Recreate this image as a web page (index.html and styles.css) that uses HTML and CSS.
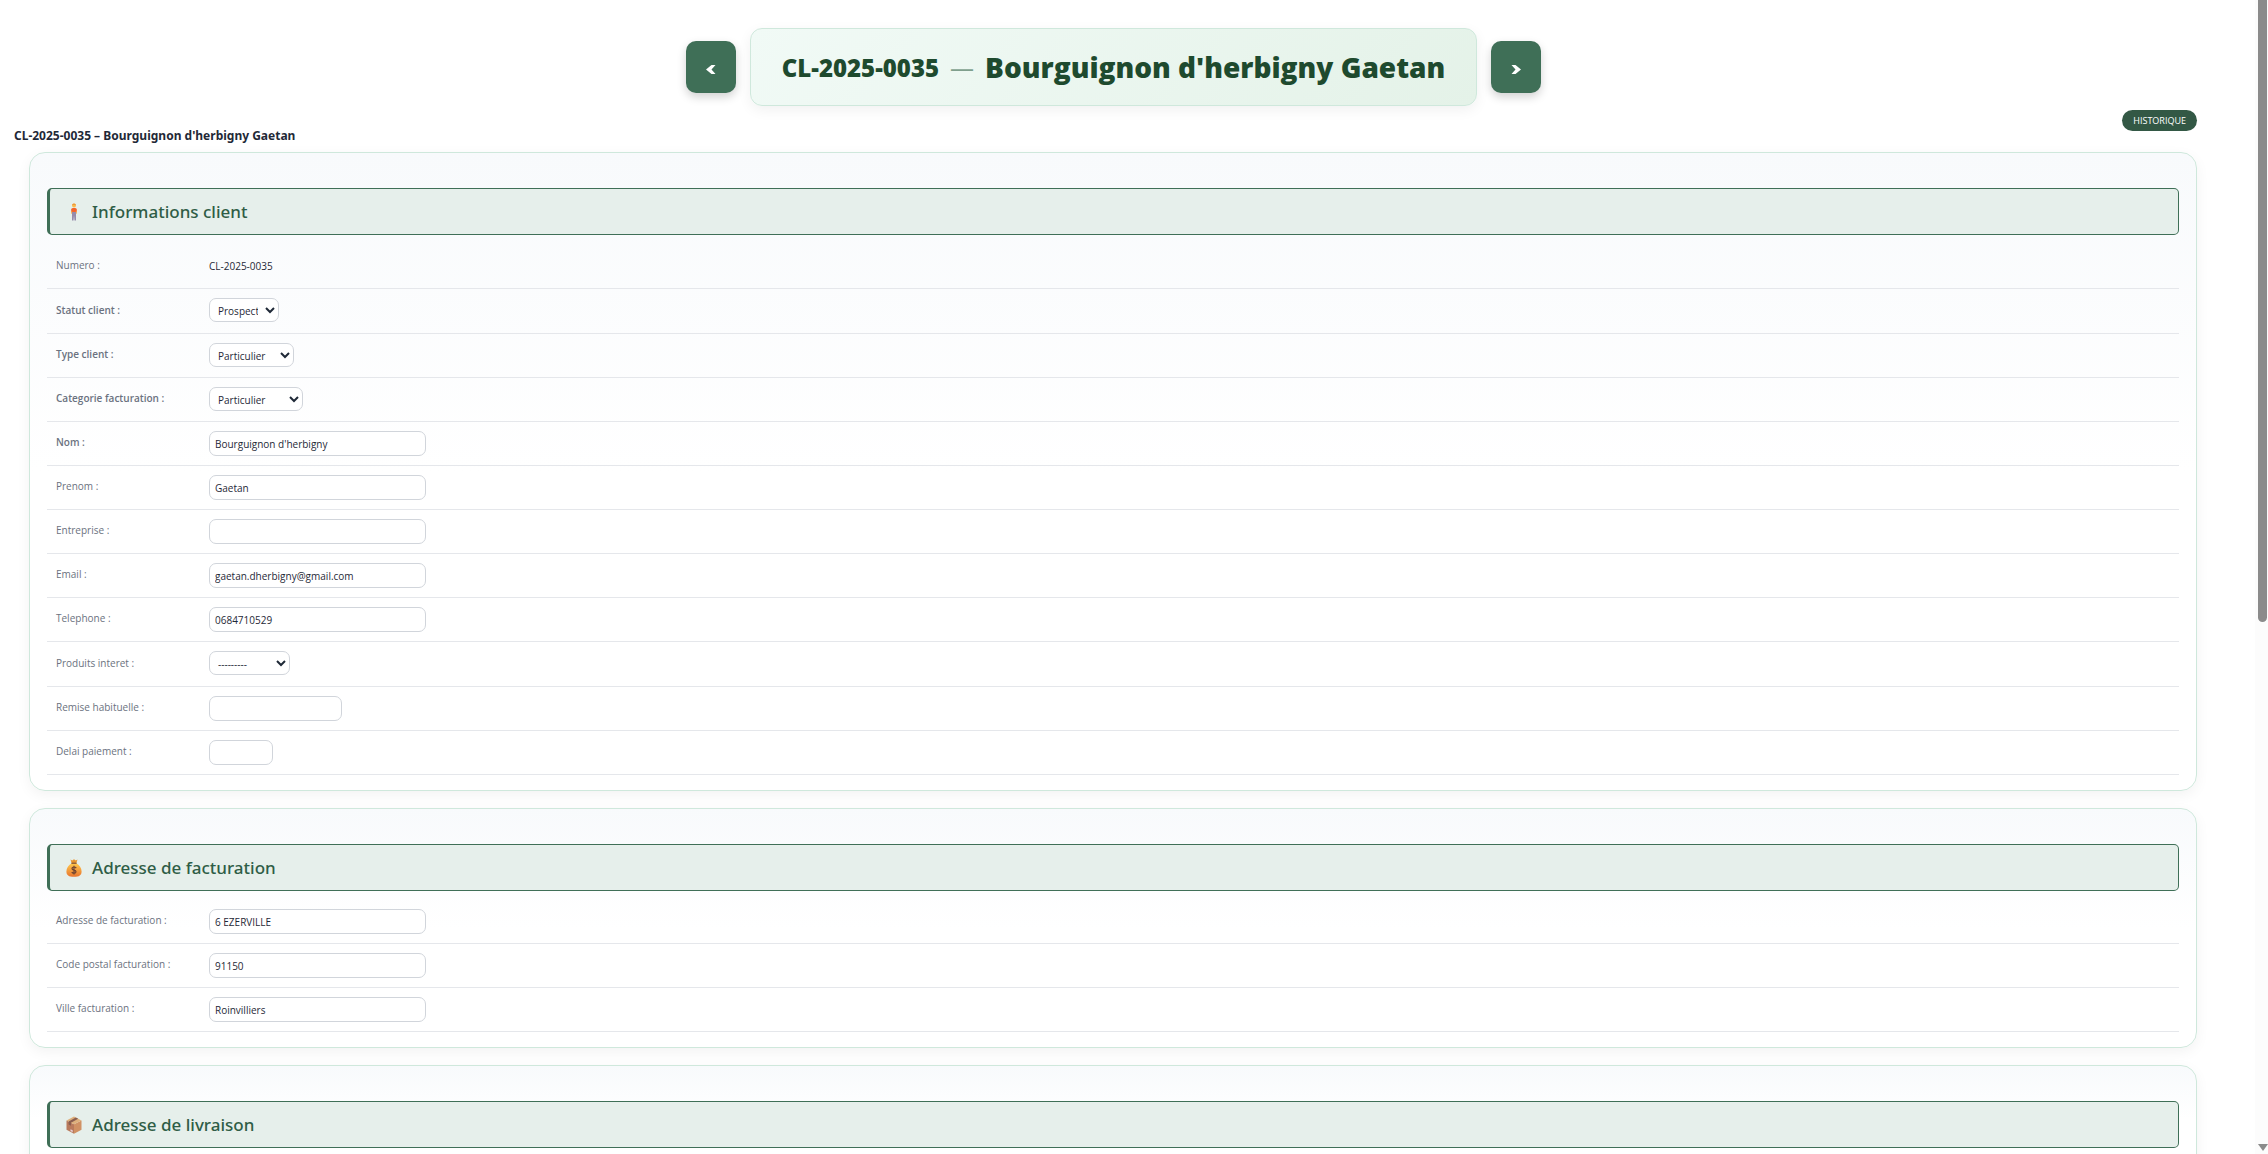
FILE: index.html
```html
<!DOCTYPE html>
<html lang="fr">
<head>
  <meta charset="UTF-8" />
  <title>CL-2025-0035 – Bourguignon d'herbigny Gaetan</title>
  <link rel="stylesheet" href="styles.css">
</head>
<body>

  <div class="page">

    <!-- Navigation client -->
    <nav class="client-nav">
      <a class="nav-btn" href="#" aria-label="Client précédent">
        <svg viewBox="0 0 10 9" aria-hidden="true"><path d="M5.500 0H9.500L5.500 4.500l4 4.500H5.500L0 4.500z" fill="currentColor"/></svg>
      </a>
      <div class="client-title">
        <span class="client-num">CL-2025-0035</span>
        <span class="client-sep">—</span>
        <span class="client-name">Bourguignon d'herbigny Gaetan</span>
      </div>
      <a class="nav-btn" href="#" aria-label="Client suivant">
        <svg viewBox="0 0 10 9" aria-hidden="true"><path d="M4.500 0H.5L4.500 4.500l-4 4.500H4.500L10 4.500z" fill="currentColor"/></svg>
      </a>
    </nav>

    <div class="title-bar">
      <h1>CL-2025-0035 – Bourguignon d'herbigny Gaetan</h1>
      <a class="history" href="#">HISTORIQUE</a>
    </div>

    <form>
      <!-- Informations client -->
      <section class="module">
        <h2>
          <svg viewBox="0 0 18 18" aria-hidden="true">
            <path d="M6.200 9.200V6.500q0-1.600 1.600-1.600h2.400q1.600 0 1.600 1.600v2.700z" fill="#f4622c"/>
            <path d="M6.200 8.200v2.600h1V8.200zm4.600 0v2.600h1V8.200z" fill="#f9b04a"/>
            <path d="M7 9h4v8.500H9.500l-.5-5-.5 5H7z" fill="#958bab"/>
            <circle cx="9" cy="2.600" r="2" fill="#fbb94c"/>
            <path d="M7 2.300Q7.300.4 9 .4t2 1.900L9 1.700z" fill="#e8963a"/>
          </svg>
          Informations client
        </h2>
        <table>
          <tr class="row-lg">
            <th>Numero :</th>
            <td>CL-2025-0035</td>
          </tr>
          <tr class="row-lg">
            <th class="required"><label for="statut">Statut client :</label></th>
            <td><select id="statut" class="w-statut"><option>Prospect</option></select></td>
          </tr>
          <tr>
            <th class="required"><label for="type">Type client :</label></th>
            <td><select id="type" class="w-type"><option>Particulier</option></select></td>
          </tr>
          <tr>
            <th class="required"><label for="categorie">Categorie facturation :</label></th>
            <td><select id="categorie" class="w-categorie"><option>Particulier</option></select></td>
          </tr>
          <tr>
            <th class="required"><label for="nom">Nom :</label></th>
            <td><input type="text" id="nom" value="Bourguignon d'herbigny" /></td>
          </tr>
          <tr>
            <th><label for="prenom">Prenom :</label></th>
            <td><input type="text" id="prenom" value="Gaetan" /></td>
          </tr>
          <tr>
            <th><label for="entreprise">Entreprise :</label></th>
            <td><input type="text" id="entreprise" /></td>
          </tr>
          <tr>
            <th><label for="email">Email :</label></th>
            <td><input type="email" id="email" value="gaetan.dherbigny@gmail.com" /></td>
          </tr>
          <tr>
            <th><label for="telephone">Telephone :</label></th>
            <td><input type="text" id="telephone" value="0684710529" /></td>
          </tr>
          <tr class="row-lg">
            <th><label for="produits">Produits interet :</label></th>
            <td><select id="produits" class="w-produits"><option>---------</option></select></td>
          </tr>
          <tr>
            <th><label for="remise">Remise habituelle :</label></th>
            <td><input type="number" id="remise" class="w-remise" /></td>
          </tr>
          <tr>
            <th><label for="delai">Delai paiement :</label></th>
            <td><input type="number" id="delai" class="w-delai" /></td>
          </tr>
        </table>
      </section>

      <!-- Adresse de facturation -->
      <section class="module">
        <h2>
          <svg viewBox="0 0 18 18" aria-hidden="true">
            <defs>
              <linearGradient id="bag" x1="0" y1="0" x2="0" y2="1">
                <stop offset="0" stop-color="#ffc94d"/>
                <stop offset="1" stop-color="#e9762f"/>
              </linearGradient>
            </defs>
            <path d="M5.500.6 7.200 1.400 9 .3l1.800 1.100 1.700-.8-1.300 3.800H6.800z" fill="#e8952e"/>
            <path d="M6.800 4.200h4.400C14.500 6 16.600 9 16.600 12.400c0 3.800-2.400 5.300-7.600 5.300s-7.600-1.500-7.600-5.300C1.400 9 3.500 6 6.800 4.200z" fill="url(#bag)"/>
            <path d="M6.400 3.600h5.200v1.300H6.400z" fill="#8a5a35"/>
            <path d="M11.200 9.100Q10.600 8 9 8 7 8 7 9.500q0 1.200 2 1.600t2 1.700q0 1.500-2 1.500-1.700 0-2.200-1.200M9 6.800v8.800" fill="none" stroke="#6d4230" stroke-width="1.200"/>
          </svg>
          Adresse de facturation
        </h2>
        <table>
          <tr>
            <th><label for="adr-fact">Adresse de facturation :</label></th>
            <td><input type="text" id="adr-fact" value="6 EZERVILLE" /></td>
          </tr>
          <tr>
            <th><label for="cp-fact">Code postal facturation :</label></th>
            <td><input type="text" id="cp-fact" value="91150" /></td>
          </tr>
          <tr>
            <th><label for="ville-fact">Ville facturation :</label></th>
            <td><input type="text" id="ville-fact" value="Roinvilliers" /></td>
          </tr>
        </table>
      </section>

      <!-- Adresse de livraison -->
      <section class="module">
        <h2>
          <svg viewBox="0 0 18 18" aria-hidden="true">
            <path d="M1.500 4.500 9 8.300v9.400l-7.500-4z" fill="#b97a5c"/>
            <path d="M16.500 4.500 9 8.300v9.400l7.500-4z" fill="#d09164"/>
            <path d="M9 .5l7.500 4L9 8.300 1.500 4.500z" fill="#deb07c"/>
            <path d="M10.800 1.500 3.600 5.400v3.200l2.400 1.200V6.700l7.200-3.900z" fill="#8a5e50"/>
            <path d="M5.500 13.200l2.200 1.100v1.900l-2.200-1.100z" fill="#e8d0d8"/>
          </svg>
          Adresse de livraison
        </h2>
      </section>
    </form>
  </div>

  <!-- Barre de défilement -->
  <div class="scrollbar" aria-hidden="true">
    <div class="thumb"></div>
    <div class="arrow"></div>
  </div>

</body>
</html>
```
FILE: styles.css
```css
* { box-sizing: border-box; }
html {
  height: 100%;
  overflow: hidden;
}
body {
  margin: 0;
  height: 100%;
  overflow: hidden;
  font-family: "Open Sans", "Noto Sans", sans-serif;
  font-size: 10px;
  color: #1f2937;
  background: #fff;
}
.page {
  padding: 28px 55px 0 14px;
}

/* Navigation */
.client-nav {
  display: flex;
  justify-content: center;
  align-items: center;
  gap: 14px;
}
.nav-btn {
  display: flex;
  justify-content: center;
  align-items: center;
  width: 50px;
  height: 52px;
  padding-top: 4px;
  border-radius: 10px;
  background: #3f6f57;
  color: #fff;
  box-shadow: 0 4px 10px rgba(0, 0, 0, 0.18);
}
.nav-btn svg {
  width: 10px;
  height: 9px;
}
.client-title {
  display: flex;
  align-items: center;
  gap: 11px;
  height: 78px;
  padding: 0 31px;
  border: 1px solid #cfe8dc;
  border-radius: 12px;
  background: linear-gradient(135deg, #f1faf6, #e4f2e8);
  color: #1e4a2e;
  box-shadow: 0 4px 14px rgba(0, 0, 0, 0.06);
}
.client-num {
  font-size: 24px;
  font-weight: 800;
}
.client-sep {
  font-size: 24px;
  color: #7f9f8d;
}
.client-name {
  font-size: 28px;
  font-weight: 800;
}

/* Titre */
.title-bar {
  display: flex;
  justify-content: space-between;
  height: 42px;
  margin-top: 4px;
}
.title-bar h1 {
  align-self: flex-end;
  margin: 0 0 8px;
  font-family: "Noto Sans", sans-serif;
  font-size: 12px;
  line-height: 16px;
  font-weight: 700;
}
.history {
  align-self: flex-start;
  margin-right: 16px;
  padding: 0 11px;
  border-radius: 11px;
  background: #335845;
  color: #fff;
  font-size: 9px;
  line-height: 21px;
  text-decoration: none;
}

/* Modules */
.module {
  margin: 0 16px 17px 15px;
  padding: 35px 17px 15px;
  border: 1px solid #cfe8dc;
  border-radius: 16px;
  background: linear-gradient(to bottom, #f8fafc, #fff 50%);
  box-shadow: 0 4px 14px rgba(0, 0, 0, 0.05);
}
.module h2 {
  display: flex;
  align-items: center;
  gap: 9px;
  height: 47px;
  margin: 0 0 9px;
  padding: 0 15px;
  border: 1px solid #3f6f57;
  border-left-width: 3px;
  border-radius: 5px;
  background: #e6efeb;
  color: #2f5d46;
  font-family: "Noto Sans", sans-serif;
  font-size: 17px;
  font-weight: 500;
}
.module h2 svg {
  width: 18px;
  height: 18px;
}
table {
  width: 100%;
  border-collapse: separate;
  border-spacing: 0;
}
tr {
  height: 44px;
}
.row-lg {
  height: 45px;
}
th, td {
  padding: 0 9px;
  border-bottom: 1px solid #e5e7eb;
  text-align: left;
  line-height: 14px;
}
th {
  width: 153px;
  padding-bottom: 3px;
  color: #6b7280;
  font-weight: 400;
}
th.required {
  font-weight: 600;
}
input, select {
  display: block;
  border: 1px solid #d1d5db;
  border-radius: 7px;
  background: #fff;
  color: #1f2937;
  font-family: inherit;
  font-size: 10px;
}
input {
  width: 217px;
  height: 25px;
  padding: 1px 5px 0;
}
select {
  height: 24px;
  margin-bottom: 2px;
  padding: 2px 4px 0;
}
.w-statut { width: 70px; }
.w-type { width: 85px; }
.w-categorie { width: 94px; }
.w-produits { width: 81px; }
.w-remise { width: 133px; }
.w-delai { width: 64px; }

/* Scrollbar */
.scrollbar {
  position: fixed;
  top: 0;
  right: 0;
  bottom: 0;
  width: 13px;
  background: #fcfcfc;
  display: flex;
  flex-direction: column;
  justify-content: space-between;
  align-items: center;
  padding: 0 0 3px 2px;
}
.thumb {
  width: 9px;
  height: 54%;
  border-radius: 0 0 5px 5px;
  background: #8b8b8b;
}
.arrow {
  border: 5px solid transparent;
  border-top: 7px solid #8b8b8b;
  border-bottom: 0;
}
```
